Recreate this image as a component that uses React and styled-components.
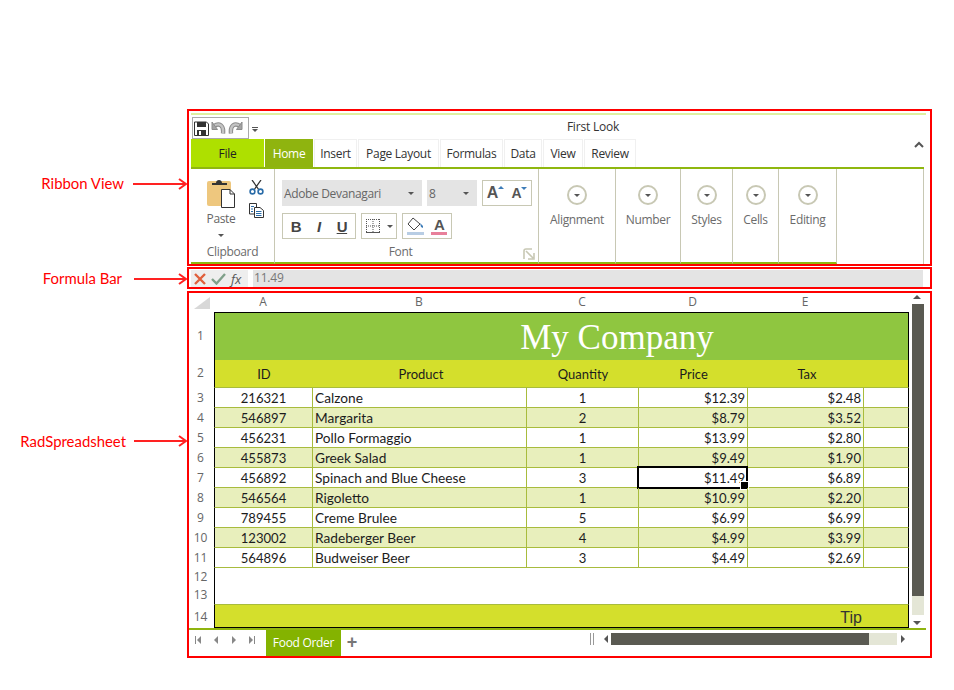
import React from "react";
import styled, { createGlobalStyle } from "styled-components";

const RED = "#ff0000";
const UI_FONT = `"Open Sans", "Noto Sans", sans-serif`;
const CELL_FONT = `Lato, "Open Sans", sans-serif`;
const COLUMNS = "98px 214px 112px 109px 116px 44px";

const GlobalStyle = createGlobalStyle`
  html, body {
    margin: 0;
    background: #fff;
  }
  * {
    box-sizing: border-box;
  }
`;

const Page = styled.div`
  width: 954px;
  height: 690px;
  padding-top: 109px;
  overflow: hidden;
  background: #fff;
`;

const Row = styled.div`
  display: grid;
  grid-template-columns: 187px 745px;
  margin-top: ${(p) => p.$gap || 0}px;
`;

const Note = styled.div`
  display: flex;
  align-items: center;
  justify-content: flex-end;
  height: 20px;
  margin-top: ${(p) => p.$top}px;
  color: ${RED};
  font: 14.9px ${CELL_FONT};
  span {
    margin-right: ${(p) => p.$space}px;
  }
  svg {
    margin-top: ${(p) => p.$drop || 0}px;
  }
`;

const Frame = styled.div`
  border: 2px solid ${RED};
  height: ${(p) => p.$h}px;
`;

const Triangle = styled.i`
  display: block;
  flex: none;
  width: 0;
  height: 0;
  border-style: solid;
  border-color: transparent;
  border-width: ${(p) => p.$s || 3}px;
  ${(p) => {
    const c = p.$c || "#555";
    const s = p.$s || 3;
    if (p.$dir === "up") return `border-bottom-color:${c};border-top-width:0;`;
    if (p.$dir === "left") return `border-right-color:${c};border-width:${s}px ${s}px ${s}px 0;`;
    if (p.$dir === "right") return `border-left-color:${c};border-width:${s}px 0 ${s}px ${s}px;`;
    return `border-top-color:${c};border-bottom-width:0;`;
  }}
`;

/* ribbon */
const RibbonInner = styled.div`
  padding: 2px 4px 0 2px;
`;

const TitleRow = styled.div`
  display: flex;
  align-items: center;
  height: 26px;
  border-top: 2px solid #dff0a0;
  font: 12px ${UI_FONT};
  letter-spacing: -0.2px;
  color: #333;
`;

const Qat = styled.div`
  display: flex;
  align-items: center;
  gap: 2px;
  width: 57px;
  height: 22px;
  margin: 2px 0 0 1px;
  padding: 0 0 0 1px;
  border: 1px solid #aaa;
`;

const QatMenu = styled.div`
  display: flex;
  flex-direction: column;
  align-items: center;
  gap: 1px;
  width: 10px;
  margin: 4px 0 0 1px;
  &::before {
    content: "";
    width: 6px;
    height: 1px;
    background: #555;
  }
`;

const Title = styled.div`
  flex: 1;
  text-align: center;
  margin: 0 0 2px 0;
`;

const TabRow = styled.div`
  display: flex;
  width: 733px;
  height: 30px;
  border-bottom: 2px solid #8fb70f;
  position: relative;
  font: 12px ${UI_FONT};
  letter-spacing: -0.3px;
`;

const Tab = styled.div`
  display: flex;
  align-items: center;
  justify-content: center;
  width: ${(p) => p.$w}px;
  margin-right: 1px;
  color: ${(p) => (p.$active ? "#fff" : p.$file ? "#222" : "#333")};
  background: ${(p) => (p.$active ? "#8fb40f" : p.$file ? "#aee000" : "#fff")};
  border: ${(p) => (p.$active || p.$file ? "0" : "1px solid #f0f0f0")};
  border-bottom: 0;
`;

const Collapse = styled.svg`
  position: absolute;
  right: 0;
  top: 2px;
`;

const RibbonBody = styled.div`
  display: flex;
  width: 733px;
  height: 95px;
  border-right: 1px solid #c8c8b4;
`;

const Group = styled.div`
  position: relative;
  width: ${(p) => p.$w}px;
  flex: none;
  border-right: 1px solid #c8c8b4;
  border-bottom: 2px solid #8fb70f;
  color: #666;
  font: 12px ${UI_FONT};
  letter-spacing: -0.35px;
`;

const GroupLabel = styled.div`
  position: absolute;
  left: 0;
  right: ${(p) => p.$inset || 0}px;
  bottom: 1px;
  text-align: center;
  line-height: 18px;
  color: #6b6b6b;
`;

const ClipBody = styled.div`
  display: flex;
  padding: 8px 0 0 15px;
`;

const PasteCol = styled.div`
  display: flex;
  flex-direction: column;
  align-items: center;
  width: 30px;
  line-height: 16px;
  span {
    margin-top: 2px;
  }
  i {
    margin-top: 7px;
  }
`;

const ClipTools = styled.div`
  display: flex;
  flex-direction: column;
  gap: 8px;
  margin: 3px 0 0 13px;
`;

const FontBody = styled.div`
  display: flex;
  flex-direction: column;
  gap: 7px;
  padding: 11px 0 0 7px;
`;

const FontLine = styled.div`
  display: flex;
  gap: 5px;
`;

const Select = styled.div`
  display: flex;
  align-items: center;
  justify-content: space-between;
  width: ${(p) => p.$w}px;
  height: 26px;
  padding: 0 8px 0 2px;
  background: #e4e4e4;
  color: #666;
`;

const ToolBox = styled.div`
  display: flex;
  align-items: center;
  justify-content: space-around;
  width: ${(p) => p.$w}px;
  height: 26px;
  border: 1px solid #c8c8b4;
  background: #fff;
  color: #444;
  font: ${(p) => (p.$bold ? "bold " : "")}15px "Liberation Sans", sans-serif;
`;

const GrowLetter = styled.span`
  display: flex;
  align-items: flex-start;
  font: bold ${(p) => p.$size}px "Liberation Sans", sans-serif;
  color: #555;
  i {
    margin-top: 2px;
  }
`;

const StyledLetter = styled.span`
  font-style: ${(p) => (p.$italic ? "italic" : "normal")};
  text-decoration: ${(p) => (p.$under ? "underline" : "none")};
`;

const ColorLetter = styled.span`
  display: block;
  width: 16px;
  text-align: center;
  font: bold 15px/15px "Liberation Sans", sans-serif;
  color: #555;
  border-bottom: 3px solid #e8809a;
`;

const SimpleBody = styled.div`
  display: flex;
  flex-direction: column;
  align-items: center;
  padding-top: 16px;
  line-height: 16px;
  color: #6b6b6b;
`;

const Dial = styled.div`
  display: flex;
  align-items: center;
  justify-content: center;
  width: 20px;
  height: 20px;
  margin-bottom: 7px;
  border: 2px solid #c8c8b4;
  border-radius: 50%;
`;

/* formula bar */
const FormulaInner = styled.div`
  display: flex;
  gap: 5px;
  height: 18px;
  padding: 1px 7px 0 2px;
`;

const FormulaButtons = styled.div`
  display: flex;
  align-items: center;
  gap: 5px;
  width: 57px;
  padding-left: 3px;
  background: #eee;
  font: italic 13px ${UI_FONT};
  color: #555;
`;

const FormulaInput = styled.div`
  flex: 1;
  padding-left: 1px;
  background: #e4e4e4;
  color: #777;
  font: 12px/15px ${UI_FONT};
  letter-spacing: -0.2px;
`;

/* sheet */
const SheetInner = styled.div`
  padding-right: 4px;
`;

const SheetArea = styled.div`
  display: flex;
`;

const Table = styled.div`
  width: 720px;
`;

const HeadLine = styled.div`
  display: flex;
  height: 20px;
  color: #666;
  font: 12px/18px ${UI_FONT};
`;

const Corner = styled.svg`
  width: 25px;
  flex: none;
`;

const Columns = styled.div`
  display: grid;
  grid-template-columns: ${COLUMNS};
  width: 695px;
  padding-right: 2px;
  text-align: center;
  border-bottom: 1px solid #000;
`;

const SheetLine = styled.div`
  display: flex;
  height: ${(p) => p.$h}px;
`;

const RowNumber = styled.div`
  width: 25px;
  flex: none;
  padding-right: 2px;
  padding-bottom: ${(p) => (p.$lift === undefined ? 2 : p.$lift)}px;
  display: flex;
  align-items: center;
  justify-content: center;
  color: #666;
  font: 12px ${UI_FONT};
`;

const Cells = styled.div`
  display: grid;
  grid-template-columns: ${COLUMNS};
  width: 695px;
  border-left: 1px solid #000;
  border-right: 1px solid #000;
  background: ${(p) => p.$bg || "#fff"};
  border-bottom: ${(p) => p.$bottom || "1px solid #a8bc3c"};
  border-top: ${(p) => p.$top || "0"};
  color: #1c1c1c;
  font: 13.7px/19px ${CELL_FONT};
`;

const Banner = styled.div`
  width: 695px;
  padding-left: 111px;
  border-left: 1px solid #000;
  border-right: 1px solid #000;
  background: #8fc640;
  color: #fff;
  text-align: center;
  font: 35px/50px "Liberation Serif", serif;
`;

const Cell = styled.div`
  position: relative;
  padding: ${(p) => (p.$num ? 1 : 0)}px 2px 0;
  font-size: ${(p) => (p.$num ? "13.1px" : "inherit")};
  text-align: ${(p) => p.$align || "left"};
  border-right: ${(p) => (p.$plain ? "0" : "1px solid #a8bc3c")};
`;

const HeaderCell = styled.div`
  text-align: center;
  padding-top: 5px;
  padding-left: ${(p) => p.$shift || 0}px;
  font-size: 13px;
`;

const Selection = styled.div`
  position: absolute;
  left: -2px;
  right: -1px;
  top: -2px;
  bottom: -1px;
  border: 2px solid #000;
  &::after {
    content: "";
    position: absolute;
    right: -3px;
    bottom: -3px;
    width: 7px;
    height: 7px;
    background: #000;
    border: 1px solid #fff;
  }
`;

const TipCell = styled.div`
  grid-column: 5;
  text-align: right;
  padding: 3px 2px 0 0;
  font: 16px/19px "Liberation Sans", sans-serif;
  color: #333;
`;

const VScroll = styled.div`
  display: flex;
  flex-direction: column;
  align-items: center;
  width: 16px;
  padding: 2px 1px 0 3px;
  i {
    margin-right: 2px;
  }
`;

const VThumb = styled.div`
  width: 12px;
  height: 292px;
  margin-top: 5px;
  background: #5a5a52;
`;

const VTrack = styled.div`
  width: 12px;
  height: 19px;
  margin-bottom: 6px;
  background: #e4e6d6;
`;

const SheetBar = styled.div`
  display: flex;
  width: 737px;
  height: 28px;
  border-top: 2px solid #8fb40f;
`;

const SheetNav = styled.div`
  display: grid;
  grid-template-columns: repeat(4, 18px);
  width: 77px;
  height: 17px;
  margin-top: 1px;
`;

const NavSlot = styled.span`
  display: flex;
  align-items: center;
  justify-content: center;
  gap: 1px;
  flex-direction: ${(p) => (p.$last ? "row-reverse" : "row")};
  &::before {
    content: "";
    display: ${(p) => (p.$end ? "block" : "none")};
    width: 1px;
    height: 8px;
    background: #888;
  }
`;

const SheetTab = styled.div`
  width: 75px;
  background: #84b300;
  color: #fff;
  text-align: center;
  font: 12px/26px ${UI_FONT};
  letter-spacing: -0.3px;
`;

const AddSheet = styled.div`
  width: 22px;
  text-align: center;
  color: #777;
  font: bold 18px/24px "Liberation Sans", sans-serif;
`;

const HScroll = styled.div`
  display: flex;
  align-items: center;
  height: 12px;
  margin: 3px 0 0 auto;
  padding-right: 21px;
`;

const Split = styled.div`
  width: 4px;
  height: 12px;
  margin-right: 10px;
  border-left: 1px solid #999;
  border-right: 1px solid #999;
`;

const HThumb = styled.div`
  width: 258px;
  height: 12px;
  margin-left: 3px;
  background: #5a5a52;
`;

const HTrack = styled.div`
  width: 28px;
  height: 12px;
  margin-right: 4px;
  background: #e4e6d6;
`;

const Arrow = ({ width }) => (
  <svg width={width} height="12" viewBox={`0 0 ${width} 12`} fill="none" stroke="#f22" strokeWidth="2">
    <path d={`M0 6H${width - 1}M${width - 8} 1L${width - 1} 6L${width - 8} 11`} />
  </svg>
);

const SaveIcon = () => (
  <svg width="15" height="15" viewBox="0 0 15 15">
    <path d="M.5 1H12.5L14.5 3V14.5H.5Z" fill="#fff" stroke="#333" />
    <rect x="3" y="1" width="9" height="5" fill="#333" />
    <rect x="3" y="9" width="9" height="5.5" fill="#333" />
    <rect x="5" y="10" width="2" height="4" fill="#fff" />
  </svg>
);

const UndoIcon = ({ flip }) => (
  <svg width="15" height="15" viewBox="0 0 15 15" style={flip ? { transform: "scaleX(-1)" } : undefined}>
    <path d="M3 5C8 1.5 13 4 12 12.5" fill="none" stroke="#8c8c8c" strokeWidth="4.4" />
    <path d="M3 5C8 1.5 13 4 12 12.5" fill="none" stroke="#c4c4c4" strokeWidth="2.4" />
    <path d="M1 1L6.5 8.5H1Z" fill="#a4a4a4" stroke="#8c8c8c" />
  </svg>
);

const PasteIcon = () => (
  <svg width="30" height="32" viewBox="0 0 30 32">
    <rect x="1" y="4" width="24" height="25" rx="2" fill="#eec77e" />
    <path d="M6 8V6H10C10 2 16 2 16 6H21V8Z" fill="#333" />
    <path d="M15.5 12.5H24L28.5 17V30.5H15.5Z" fill="#fff" stroke="#333" />
    <path d="M24 12.5V17H28.5" fill="none" stroke="#333" />
  </svg>
);

const ScissorsIcon = () => (
  <svg width="15" height="15" viewBox="0 0 15 15" fill="none">
    <path d="M3 0L10 10M12 0L5 10" stroke="#333" strokeWidth="1.3" />
    <circle cx="3.5" cy="11.5" r="2.4" stroke="#2a6ca8" strokeWidth="1.6" />
    <circle cx="11.5" cy="11.5" r="2.4" stroke="#2a6ca8" strokeWidth="1.6" />
  </svg>
);

const CopyIcon = () => (
  <svg width="15" height="15" viewBox="0 0 15 15" fill="#fff" stroke="#333">
    <path d="M.5.5H7.5V11H.5Z" />
    <path d="M5.5 4.5H11L14.5 7.5V14.5H5.5Z" />
    <path d="M2 3.5H5M2 6H4M2 8.5H4M7 8.5H12.5M7 10.5H12.5M7 12.5H12.5" stroke="#2a6ca8" />
  </svg>
);

const BorderIcon = () => (
  <svg width="14" height="14" viewBox="0 0 14 14" fill="none" stroke="#555" strokeDasharray="1 1">
    <path d="M.5 0V14M7 0V14M13.5 0V14M0 .5H14M0 7H14" />
    <path d="M0 13.5H14" strokeDasharray="none" />
  </svg>
);

const FillIcon = () => (
  <svg width="17" height="18" viewBox="0 0 17 18">
    <path d="M6 1L1 7L7 13L13 7Z" fill="#fff" stroke="#444" />
    <path d="M13 6L16 9V11L14 10Z" fill="#3d7cb8" />
    <rect y="15" width="17" height="3" fill="#b8cde4" />
  </svg>
);

const Launcher = styled.svg`
  position: absolute;
  right: 3px;
  bottom: 2px;
`;

const X = () => (
  <svg width="12" height="12" viewBox="0 0 12 12" stroke="#e0603c" strokeWidth="2.4">
    <path d="M1 1L11 11M11 1L1 11" />
  </svg>
);

const Check = () => (
  <svg width="15" height="12" viewBox="0 0 15 12" fill="none" stroke="#7fa08a" strokeWidth="2.4">
    <path d="M1 6L5.5 10.5L14 1" />
  </svg>
);

const dialGroups = [
  { name: "Alignment", w: 77 },
  { name: "Number", w: 65 },
  { name: "Styles", w: 52 },
  { name: "Cells", w: 46 },
  { name: "Editing", w: 58 },
];

const tabs = [
  { name: "Insert", w: 43 },
  { name: "Page Layout", w: 81 },
  { name: "Formulas", w: 63 },
  { name: "Data", w: 38 },
  { name: "View", w: 40 },
  { name: "Review", w: 52 },
];

const orders = [
  ["216321", "Calzone", "1", "$12.39", "$2.48"],
  ["546897", "Margarita", "2", "$8.79", "$3.52"],
  ["456231", "Pollo Formaggio", "1", "$13.99", "$2.80"],
  ["455873", "Greek Salad", "1", "$9.49", "$1.90"],
  ["456892", "Spinach and Blue Cheese", "3", "$11.49", "$6.89"],
  ["546564", "Rigoletto", "1", "$10.99", "$2.20"],
  ["789455", "Creme Brulee", "5", "$6.99", "$6.99"],
  ["123002", "Radeberger Beer", "4", "$4.99", "$3.99"],
  ["564896", "Budweiser Beer", "3", "$4.49", "$2.69"],
];

const Ribbon = () => (
  <RibbonInner>
    <TitleRow>
      <Qat>
        <SaveIcon />
        <UndoIcon />
        <UndoIcon flip />
      </Qat>
      <QatMenu>
        <Triangle $s={3} />
      </QatMenu>
      <Title>First Look</Title>
    </TitleRow>
    <TabRow>
      <Tab $w={73} $file>File</Tab>
      <Tab $w={48} $active>Home</Tab>
      {tabs.map((t) => (
        <Tab key={t.name} $w={t.w}>{t.name}</Tab>
      ))}
      <Collapse width="10" height="8" viewBox="0 0 10 8" fill="none" stroke="#555" strokeWidth="2">
        <path d="M1 6L5 2L9 6" />
      </Collapse>
    </TabRow>
    <RibbonBody>
      <Group $w={84}>
        <ClipBody>
          <PasteCol>
            <PasteIcon />
            <span>Paste</span>
            <Triangle $s={3} />
          </PasteCol>
          <ClipTools>
            <ScissorsIcon />
            <CopyIcon />
          </ClipTools>
        </ClipBody>
        <GroupLabel>Clipboard</GroupLabel>
      </Group>
      <Group $w={264}>
        <FontBody>
          <FontLine>
            <Select $w={140}>Adobe Devanagari<Triangle $s={3} /></Select>
            <Select $w={50}>8<Triangle $s={3} /></Select>
            <ToolBox $w={50}>
              <GrowLetter $size={16}>A<Triangle $dir="up" $c="#3d7cb8" /></GrowLetter>
              <GrowLetter $size={14}>A<Triangle $c="#3d7cb8" /></GrowLetter>
            </ToolBox>
          </FontLine>
          <FontLine>
            <ToolBox $w={74} $bold>
              <StyledLetter>B</StyledLetter>
              <StyledLetter $italic>I</StyledLetter>
              <StyledLetter $under>U</StyledLetter>
            </ToolBox>
            <ToolBox $w={36}>
              <BorderIcon />
              <Triangle $s={3} />
            </ToolBox>
            <ToolBox $w={50}>
              <FillIcon />
              <ColorLetter>A</ColorLetter>
            </ToolBox>
          </FontLine>
        </FontBody>
        <GroupLabel $inset={12}>Font</GroupLabel>
        <Launcher width="12" height="12" viewBox="0 0 12 12" fill="none" stroke="#c8c8b4" strokeWidth="1.6">
          <path d="M1 11V3C1 2 2 1 3 1H9" />
          <path d="M3 3L10 10M11 5V11H5" />
        </Launcher>
      </Group>
      {dialGroups.map((g) => (
        <Group key={g.name} $w={g.w}>
          <SimpleBody>
            <Dial><Triangle $s={3} /></Dial>
            {g.name}
          </SimpleBody>
        </Group>
      ))}
    </RibbonBody>
  </RibbonInner>
);

const Sheet = () => (
  <SheetInner>
    <SheetArea>
      <Table>
        <HeadLine>
          <Corner height="19" viewBox="0 0 25 19">
            <path d="M5 16H21V4Z" fill="#d8d8d8" />
          </Corner>
          <Columns>
            {["A", "B", "C", "D", "E"].map((c) => (
              <div key={c}>{c}</div>
            ))}
          </Columns>
        </HeadLine>
        <SheetLine $h={47}>
          <RowNumber>1</RowNumber>
          <Banner>My Company</Banner>
        </SheetLine>
        <SheetLine $h={28}>
          <RowNumber $lift={4}>2</RowNumber>
          <Cells $bg="#d4df2c">
            <HeaderCell>ID</HeaderCell>
            <HeaderCell $shift={2}>Product</HeaderCell>
            <HeaderCell>Quantity</HeaderCell>
            <HeaderCell>Price</HeaderCell>
            <HeaderCell $shift={2}>Tax</HeaderCell>
          </Cells>
        </SheetLine>
        {orders.map((o, i) => (
          <SheetLine $h={20} key={o[0]}>
            <RowNumber>{i + 3}</RowNumber>
            <Cells $bg={i % 2 ? "#e8efbc" : "#fff"}>
              <Cell $align="center" $num>{o[0]}</Cell>
              <Cell>{o[1]}</Cell>
              <Cell $align="center" $num>{o[2]}</Cell>
              <Cell $align="right" $num>
                {o[3]}
                {i === 4 && <Selection />}
              </Cell>
              <Cell $align="right" $num>{o[4]}</Cell>
              <Cell $plain />
            </Cells>
          </SheetLine>
        ))}
        <SheetLine $h={18}>
          <RowNumber>12</RowNumber>
          <Cells $bottom="0" />
        </SheetLine>
        <SheetLine $h={18}>
          <RowNumber>13</RowNumber>
          <Cells $bottom="0" />
        </SheetLine>
        <SheetLine $h={24}>
          <RowNumber $lift={0}>14</RowNumber>
          <Cells $bg="#d4df2c" $top="1px solid #a8bc3c" $bottom="1px solid #000">
            <TipCell>Tip</TipCell>
          </Cells>
        </SheetLine>
      </Table>
      <VScroll>
        <Triangle $dir="up" $s={4} />
        <VThumb />
        <VTrack />
        <Triangle $s={4} />
      </VScroll>
    </SheetArea>
    <SheetBar>
      <SheetNav>
        <NavSlot $end><Triangle $dir="left" $s={4} $c="#888" /></NavSlot>
        <NavSlot><Triangle $dir="left" $s={4} $c="#888" /></NavSlot>
        <NavSlot><Triangle $dir="right" $s={4} $c="#888" /></NavSlot>
        <NavSlot $end $last><Triangle $dir="right" $s={4} $c="#888" /></NavSlot>
      </SheetNav>
      <SheetTab>Food Order</SheetTab>
      <AddSheet>+</AddSheet>
      <HScroll>
        <Split />
        <Triangle $dir="left" $s={4} />
        <HThumb />
        <HTrack />
        <Triangle $dir="right" $s={4} />
      </HScroll>
    </SheetBar>
  </SheetInner>
);

export default function App() {
  return (
    <Page>
      <GlobalStyle />
      <Row>
        <Note $top={64} $space={9} $drop={1}>
          <span>Ribbon View</span>
          <Arrow width={54} />
        </Note>
        <Frame $h={157}>
          <Ribbon />
        </Frame>
      </Row>
      <Row $gap={1}>
        <Note $top={1} $space={12} $drop={1}>
          <span>Formula Bar</span>
          <Arrow width={53} />
        </Note>
        <Frame $h={22}>
          <FormulaInner>
            <FormulaButtons>
              <X />
              <Check />
              fx
            </FormulaButtons>
            <FormulaInput>11.49</FormulaInput>
          </FormulaInner>
        </Frame>
      </Row>
      <Row $gap={2}>
        <Note $top={140} $space={8}>
          <span>RadSpreadsheet</span>
          <Arrow width={53} />
        </Note>
        <Frame $h={367}>
          <Sheet />
        </Frame>
      </Row>
    </Page>
  );
}
